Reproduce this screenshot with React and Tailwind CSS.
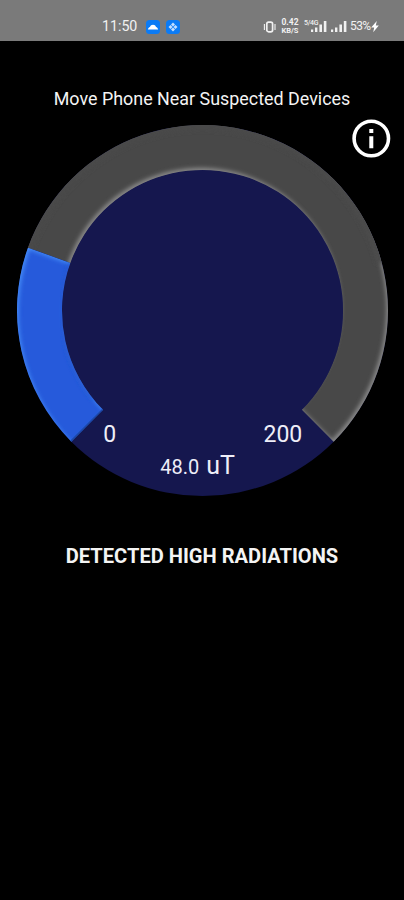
const CENTER = 185.5;
const OUTER = 185.5;
const INNER = 140.5;
const MAX_VALUE = 200;
const START_ANGLE = 135;
const SWEEP = 270;

const point = (radius, degrees) => {
    const rad = (degrees * Math.PI) / 180;
    return `${(CENTER + radius * Math.cos(rad)).toFixed(2)} ${(CENTER + radius * Math.sin(rad)).toFixed(2)}`;
};

const ringPath = (from, to) => {
    const large = to - from > 180 ? 1 : 0;
    return `M${point(OUTER, from)} A${OUTER} ${OUTER} 0 ${large} 1 ${point(OUTER, to)} L${point(INNER, to)} A${INNER} ${INNER} 0 ${large} 0 ${point(INNER, from)} Z`;
};

function StatusBar() {
    return (
        <header className="flex h-[41px] items-end justify-between bg-[#7a7a7a] pr-[25px] pb-[7px] pl-[102px] text-[#f1f1f1]">
            <div className="flex items-center">
                <span className="w-[44px] text-[14.2px] leading-[15px]">11:50</span>
                <svg width="14" height="14" viewBox="0 0 14 14">
                    <rect width="14" height="14" rx="3.5" fill="#0b7bf5" />
                    <path d="M1.8 9.4C2.4 7.8 3 7.2 4 7c.4-1.5 1.5-2.2 3-2.2s2.6.7 3 2.2c1 .2 1.6.8 2.2 2.4z" fill="#fff" />
                </svg>
                <svg className="ml-[6px]" width="14" height="14" viewBox="0 0 14 14">
                    <rect width="14" height="14" rx="3.5" fill="#0b7bf5" />
                    <path d="M7 2.5l2 2-2 2-2-2zM7 7.5l2 2-2 2-2-2zM4.5 5l2 2-2 2-2-2zM9.5 5l2 2-2 2-2-2z" fill="#c4dfff" />
                </svg>
            </div>

            <div className="flex h-[15px] items-center">
                {/* Vibrate mode */}
                <svg width="13" height="14" viewBox="0 0 13 14" fill="none" stroke="#f1f1f1">
                    <rect x="3.8" y="2.2" width="5.8" height="9.6" rx="1.8" strokeWidth="1.7" />
                    <path d="M1.4 4v6M12 4v6" strokeWidth="1.1" />
                </svg>
                <div className="ml-[5px] flex w-[18px] flex-col items-center text-[8.5px] leading-[7.5px] font-bold">
                    <span>0.42</span>
                    <span className="text-[7.5px] leading-[7.5px]">KB/S</span>
                </div>
                <div className="ml-[5px] flex h-[13px] items-start">
                    <span className="w-[7px] text-[7px] leading-[7px] font-medium tracking-tighter">5/4G</span>
                    <SignalBars />
                </div>
                <div className="ml-[4px] flex h-[13px]">
                    <SignalBars />
                </div>
                <span className="ml-[3px] w-[21px] text-[12px] leading-[13px] tracking-[-0.6px]">53%</span>
                <svg width="8" height="13" viewBox="0 0 8 13">
                    <path d="M5.8 1L.2 7.6h3L2.2 12.2l5.6-6.8h-3z" fill="#fff" />
                </svg>
            </div>
        </header>
    );
}

function SignalBars() {
    return (
        <svg width="16" height="13" viewBox="0 0 16 13" fill="#f1f1f1">
            <rect x="0" y="9.5" width="2.2" height="2.5" />
            <rect x="4" y="7.5" width="2.4" height="4.5" />
            <rect x="8.4" y="4.5" width="2.6" height="7.5" />
            <rect x="12.8" y="1" width="2.6" height="11" />
        </svg>
    );
}

function Gauge({ value }) {
    const split = START_ANGLE + (SWEEP * value) / MAX_VALUE;
    const track = ringPath(split, START_ANGLE + SWEEP);
    const progress = ringPath(START_ANGLE, split);
    // starts behind the progress arc so the seam gets no highlight
    const trackShade = ringPath(split - 20, START_ANGLE + SWEEP);

    return (
        <div className="relative ml-[17.3px] h-[371px] w-[371px] rounded-full bg-[#15174e] text-[#eeeef8]">
            <svg className="absolute inset-0" width="371" height="371" viewBox="0 0 371 371">
                <defs>
                    <filter id="soften" x="-5%" y="-5%" width="110%" height="110%">
                        <feGaussianBlur stdDeviation="2" />
                    </filter>
                    <clipPath id="track">
                        <path d={track} />
                    </clipPath>
                    <clipPath id="progress">
                        <path d={progress} />
                    </clipPath>
                </defs>

                {/* Track, lit along its lower right edges */}
                <g clipPath="url(#track)">
                    <path d={track} fill="#484848" />
                    <path
                        d={`M-20 -20H391V391H-20Z ${trackShade}`}
                        fill="#888888"
                        fillRule="evenodd"
                        transform="translate(-1.8 -2.2)"
                        filter="url(#soften)"
                    />
                    <path
                        d={`M${point(OUTER, 190)} A${OUTER} ${OUTER} 0 0 1 ${point(OUTER, 345)}`}
                        fill="none"
                        stroke="#484848"
                        strokeWidth="10"
                        filter="url(#soften)"
                    />
                </g>

                {/* Progress, lit from the upper left */}
                <g clipPath="url(#progress)">
                    <path d={progress} fill="#265adb" />
                    <path
                        d={`M-20 -20H391V391H-20Z ${progress}`}
                        fill="#458df8"
                        fillRule="evenodd"
                        transform="translate(1.5 2)"
                        filter="url(#soften)"
                    />
                    <path
                        d={`M${point(INNER - 2, START_ANGLE)} L${point(OUTER + 2, START_ANGLE)}`}
                        stroke="#1b48a8"
                        strokeWidth="3"
                    />
                    <path
                        d={`M${point(INNER, START_ANGLE + 6)} A${INNER} ${INNER} 0 0 1 ${point(INNER, split)}`}
                        fill="none"
                        stroke="#2453cb"
                        strokeWidth="3"
                        filter="url(#soften)"
                    />
                </g>
            </svg>

            <div className="relative flex h-full flex-col justify-end pb-[15px]">
                <div className="flex justify-between px-[86px] text-[23px] leading-[28px]">
                    <span>0</span>
                    <span>{MAX_VALUE}</span>
                </div>
                <div className="mt-[3px] flex items-baseline gap-[7px] pl-[143px] leading-[28px]">
                    <span className="text-[20px]">{value.toFixed(1)}</span>
                    <span className="text-[25px]">uT</span>
                </div>
            </div>
        </div>
    );
}

export default function App() {
    return (
        <div className="h-[900px] w-[404px] overflow-hidden bg-black font-['Roboto',sans-serif]">
            <StatusBar />
            <main className="relative pt-[47px]">
                <h1 className="text-center text-[17.9px] leading-[22px] text-[#f4f4f4]">Move Phone Near Suspected Devices</h1>
                <button className="absolute top-[78px] right-[13px]" aria-label="Info">
                    <svg width="39" height="39" viewBox="0 0 39 39">
                        <circle cx="19.3" cy="19.5" r="17.2" fill="none" stroke="#fff" strokeWidth="3.6" />
                        <path d="M17.3 10h4v4h-4zM17.3 17.3h4v12h-4z" fill="#fff" />
                    </svg>
                </button>
                <div className="mt-[15px]">
                    <Gauge value={48} />
                </div>
                <p className="mt-[48px] text-center text-[20.1px] leading-[24px] font-bold text-[#f4f4f4]">
                    DETECTED HIGH RADIATIONS
                </p>
            </main>
        </div>
    );
}
